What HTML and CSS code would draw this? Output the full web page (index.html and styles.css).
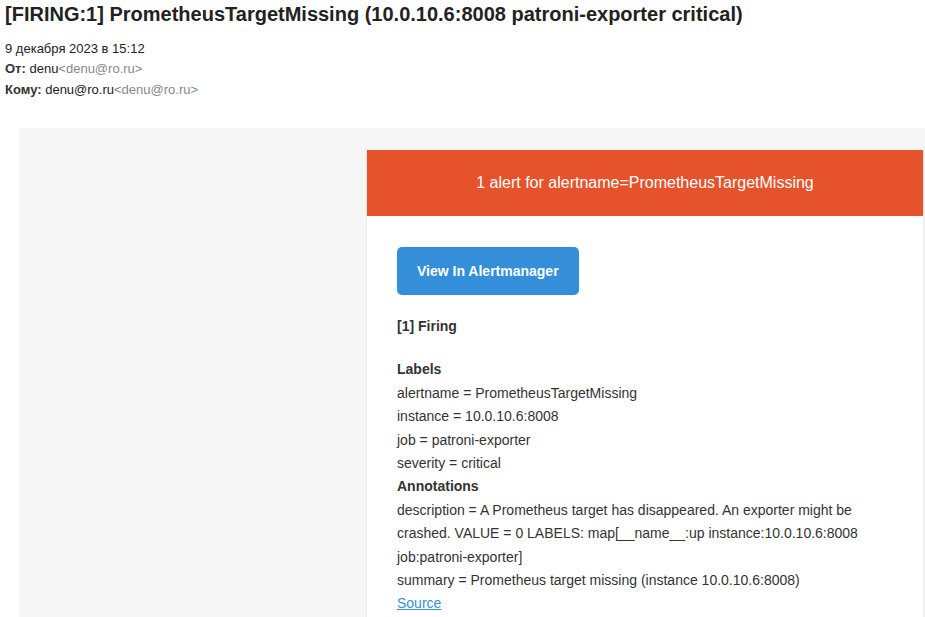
FILE: index.html
```html
<!DOCTYPE html>
<html lang="ru">
<head>
<meta charset="utf-8">
<title>[FIRING:1] PrometheusTargetMissing</title>
<link rel="stylesheet" href="styles.css">
</head>
<body>
<div class="mail">
  <header class="mail-head">
    <h1 class="subject">[FIRING:1] PrometheusTargetMissing (10.0.10.6:8008 patroni-exporter critical)</h1>
    <div class="meta-date">9 декабря 2023 в 15:12</div>
    <div class="meta-row"><span class="meta-label">От:</span> <span class="meta-name">denu</span><span class="meta-addr">&lt;denu@ro.ru&gt;</span></div>
    <div class="meta-row"><span class="meta-label">Кому:</span> <span class="meta-name">denu@ro.ru</span><span class="meta-addr">&lt;denu@ro.ru&gt;</span></div>
  </header>
  <section class="body-wrap">
    <div class="card">
      <div class="alert-head">1 alert for alertname=PrometheusTargetMissing</div>
      <div class="content">
        <div class="block"><a class="btn" href="#">View In Alertmanager</a></div>
        <div class="block"><strong>[1] Firing</strong></div>
        <div class="block details">
          <strong>Labels</strong><br>
          alertname = PrometheusTargetMissing<br>
          instance = 10.0.10.6:8008<br>
          job = patroni-exporter<br>
          severity = critical<br>
          <strong>Annotations</strong><br>
          description = A Prometheus target has disappeared. An exporter might be crashed. VALUE = 0 LABELS: map[__name__:up instance:10.0.10.6:8008 job:patroni-exporter]<br>
          summary = Prometheus target missing (instance 10.0.10.6:8008)<br>
          <a class="src" href="#">Source</a>
        </div>
      </div>
    </div>
  </section>
</div>
</body>
</html>
```
FILE: styles.css
```css
html, body {
  margin: 0;
  padding: 0;
  background: #fff;
  overflow: hidden;
}
body {
  font-family: "Liberation Sans", Arial, sans-serif;
  color: #222;
  width: 925px;
  height: 617px;
}
.mail {
  height: 617px;
  overflow: hidden;
}
.mail-head {
  padding: 2px 0 0 5px;
}
.subject {
  margin: 0;
  font-size: 20px;
  line-height: 24px;
  font-weight: bold;
  color: #222;
}
.meta-date {
  margin-top: 13px;
  font-size: 13px;
  line-height: 19px;
  color: #222;
}
.meta-row {
  font-size: 13px;
  line-height: 21px;
  color: #222;
}
.meta-label {
  font-weight: bold;
  color: #333;
}
.meta-addr {
  color: #888;
}
.body-wrap {
  margin: 28px 0 0 19px;
  background: #f6f6f6;
  padding: 22px 1px 20px 347px;
}
.card {
  width: 556px;
  background: #fff;
  border: 1px solid #e9e9e9;
  border-top: none;
}
.alert-head {
  background: #e6522c;
  color: #fff;
  font-size: 16px;
  line-height: 26px;
  padding: 20px;
  text-align: center;
}
.content {
  padding: 31px 30px 10px 30px;
  font-size: 14px;
  line-height: 23.4px;
  color: #333;
}
.block {
  padding-bottom: 20px;
}
.btn {
  display: inline-block;
  background: #348eda;
  color: #fff;
  font-weight: bold;
  font-size: 14px;
  line-height: 28px;
  padding: 10px 20px;
  border-radius: 5px;
  text-decoration: none;
}
.src {
  color: #348eda;
  text-decoration: underline;
}
```
